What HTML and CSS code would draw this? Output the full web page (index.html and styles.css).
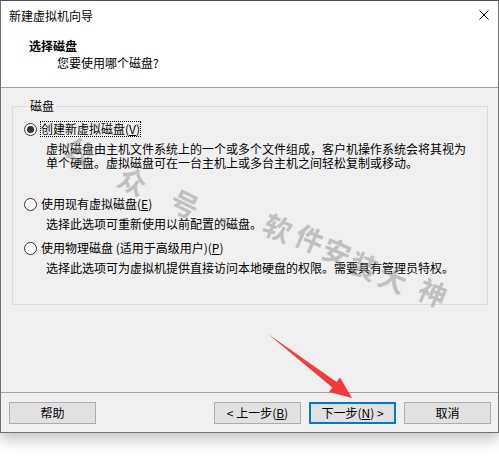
FILE: index.html
```html
<!DOCTYPE html>
<html lang="zh-CN">
<head>
    <meta charset="UTF-8">
    <title>新建虚拟机向导</title>
    <link rel="stylesheet" href="styles.css">
</head>
<body>
    <div class="window">
        <div class="titlebar">
            <span class="title">新建虚拟机向导</span>
            <svg class="close" width="10" height="10" viewBox="0 0 10 10">
                <path d="M0.5 0.5 L9.5 9.5 M9.5 0.5 L0.5 9.5" stroke="#000" stroke-width="1" fill="none"/>
            </svg>
        </div>
        <div class="header">
            <div class="head-title">选择磁盘</div>
            <div class="head-sub">您要使用哪个磁盘?</div>
        </div>
        <div class="content">
            <fieldset class="group">
                <legend>磁盘</legend>
                <div class="option">
                    <div class="choice"><span class="radio checked"></span><span class="label focus">创建新虚拟磁盘(<u>V</u>)</span></div>
                    <div class="desc">虚拟磁盘由主机文件系统上的一个或多个文件组成，客户机操作系统会将其视为<br>单个硬盘。虚拟磁盘可在一台主机上或多台主机之间轻松复制或移动。</div>
                </div>
                <div class="option second">
                    <div class="choice"><span class="radio"></span><span class="label">使用现有虚拟磁盘(<u>E</u>)</span></div>
                    <div class="desc">选择此选项可重新使用以前配置的磁盘。</div>
                </div>
                <div class="option third">
                    <div class="choice"><span class="radio"></span><span class="label">使用物理磁盘 (适用于高级用户)(<u>P</u>)</span></div>
                    <div class="desc">选择此选项可为虚拟机提供直接访问本地硬盘的权限。需要具有管理员特权。</div>
                </div>
            </fieldset>
        </div>
        <div class="footer">
            <button class="btn">帮助</button>
            <span class="spacer"></span>
            <button class="btn">&lt; 上一步(<u>B</u>)</button>
            <button class="btn default">下一步(<u>N</u>) &gt;</button>
            <button class="btn">取消</button>
        </div>
    </div>

    <!-- watermark and the red arrow drawn on top of the dialog -->
    <svg class="overlay" width="499" height="458" viewBox="0 0 499 458">
        <g class="mark">
            <text transform="translate(80 150) rotate(26)">公</text>
            <text transform="translate(133 180) rotate(26)">众</text>
            <text transform="translate(185 203) rotate(26)">号</text>
            <text transform="translate(228 212) rotate(26)">.</text>
            <text transform="translate(278 227) rotate(23)">软</text>
            <text transform="translate(310 238) rotate(23)">件</text>
            <text transform="translate(337 251) rotate(23)">安</text>
            <text transform="translate(364 265) rotate(23)">装</text>
            <text transform="translate(393 278) rotate(23)">大</text>
            <text transform="translate(433 292) rotate(23)">神</text>
        </g>
        <polygon points="268,334 336.6,381.9 340,377.5 352,398 329,391.9 332.4,387.5" fill="#f23a3a"/>
    </svg>
</body>
</html>
```

FILE: styles.css
```css
body {
    margin: 0;
    background-color: #fff;
    font-family: "Noto Sans CJK SC", sans-serif;
    font-size: 12px;
    color: #000;
    position: relative;
    width: 499px;
    height: 458px;
    overflow: hidden;
}
.window {
    width: 499px;
    height: 433px;
    box-sizing: border-box;
    border: 1px solid #707070;
    border-top-color: #4e4c5c;
    display: flex;
    flex-direction: column;
    box-shadow: 0 6px 14px rgba(0, 0, 0, 0.25);
    background-color: #f0f0f0;
}
.titlebar {
    height: 31px;
    flex: none;
    display: flex;
    align-items: flex-start;
    background-color: #fff;
}
.title {
    line-height: 30px;
    padding-left: 8px;
    flex: 1;
}
.close {
    margin-top: 9px;
    margin-right: 9px;
}
.header {
    height: 56px;
    flex: none;
    box-sizing: border-box;
    background-color: #fff;
    border-bottom: 1px solid #a0a0a0;
    padding-top: 6px;
}
.head-title {
    font-weight: bold;
    line-height: 16px;
    padding-left: 28px;
}
.head-sub {
    line-height: 16px;
    margin-top: 1px;
    padding-left: 56px;
}
.content {
    height: 304px;
    flex: none;
    box-sizing: border-box;
    padding-top: 10px;
}
.group {
    margin: 0 10px 0 11px;
    height: 207px;
    box-sizing: border-box;
    border: 1px solid #dcdcdc;
    padding: 7px 0 0 11px;
    min-width: 0;
}
.group legend {
    margin-left: 4px;
    padding: 0 2px;
    line-height: 16px;
}
.choice {
    display: flex;
    align-items: center;
    height: 16px;
}
.radio {
    width: 13px;
    height: 13px;
    box-sizing: border-box;
    border: 1px solid #333;
    border-radius: 50%;
    background-color: #fff;
    display: flex;
    align-items: center;
    justify-content: center;
    flex: none;
}
.radio.checked::after {
    content: "";
    width: 7px;
    height: 7px;
    border-radius: 50%;
    background-color: #333;
}
.label {
    margin-left: 3px;
    line-height: 14px;
    border: 1px solid transparent;
}
.label.focus {
    border: 1px dotted #000;
}
.desc {
    margin-top: 5px;
    margin-left: 22px;
    line-height: 14px;
}
.option.second {
    margin-top: 26px;
}
.option.third {
    margin-top: 9px;
}
.footer {
    height: 40px;
    flex: none;
    box-sizing: border-box;
    border-top: 1px solid #a0a0a0;
    padding: 9px 7px 0 8px;
    display: flex;
    align-items: flex-start;
    gap: 8px;
}
.spacer {
    flex: 1;
}
.btn {
    width: 87px;
    height: 22px;
    box-sizing: border-box;
    border: 1px solid #adadad;
    background-color: #e1e1e1;
    font-family: inherit;
    font-size: 12px;
    color: #000;
    padding: 0;
    line-height: 18px;
}
.btn.default {
    border: 2px solid #0078d7;
}
.overlay {
    position: absolute;
    left: 0;
    top: 0;
    pointer-events: none;
}
.mark text {
    font-family: "Noto Sans CJK SC", sans-serif;
    font-size: 28px;
    font-weight: bold;
    fill: #888;
    opacity: 0.45;
    text-anchor: middle;
    dominant-baseline: central;
}
```
